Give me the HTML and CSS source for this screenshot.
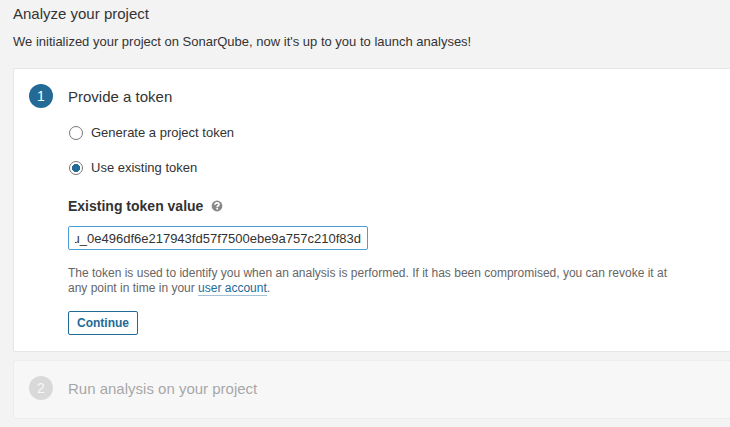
FILE: index.html
```html
<!DOCTYPE html>
<html lang="en">
<head>
<meta charset="utf-8">
<title>Analyze your project</title>
<link rel="stylesheet" href="styles.css">
</head>
<body>
<main class="page">
  <header class="page-header">
    <h1 class="title">Analyze your project</h1>
    <p class="intro">We initialized your project on SonarQube, now it's up to you to launch analyses!</p>
  </header>
  <section class="step">
    <span class="step-number">1</span>
    <div class="step-content">
      <h2 class="title step-title">Provide a token</h2>
      <form class="token-form">
        <label class="option"><input class="radio" type="radio" name="mode">Generate a project token</label>
        <label class="option"><input class="radio" type="radio" name="mode" checked>Use existing token</label>
        <div class="field-header">
          <label class="field-label" for="token">Existing token value</label>
          <svg class="help" viewBox="0 0 12 12" aria-hidden="true">
            <circle cx="6" cy="6" r="5.400" fill="#888"/>
            <path d="M4 4.700C4.100 3.400 4.900 2.800 6 2.800c1.200 0 2 .7 2 1.700 0 1.300-1.800 1.300-1.800 2.500" fill="none" stroke="#fff" stroke-width="1.700"/>
            <path d="M5.300 7.800h1.700v1.700H5.300z" fill="#fff"/>
          </svg>
        </div>
        <input class="token-input" id="token" type="text" value="squ_0e496df6e217943fd57f7500ebe9a757c210f83d">
        <p class="note">The token is used to identify you when an analysis is performed. If it has been compromised, you can revoke it at any point in time in your <a class="link" href="#">user account</a>.</p>
        <button class="button" type="button">Continue</button>
      </form>
    </div>
  </section>
  <section class="step step-disabled">
    <span class="step-number">2</span>
    <div class="step-content">
      <h2 class="title step-title">Run analysis on your project</h2>
    </div>
  </section>
</main>
</body>
</html>
```
FILE: styles.css
```css
* {
  box-sizing: border-box;
}

body {
  margin: 0;
  background: #f3f3f3;
  color: #333;
  font: 13px/20px "Liberation Sans", Arial, sans-serif;
}

.page {
  padding: 2px 0 9px 13px;
}

.page-header {
  margin-bottom: 16px;
}

.title {
  margin: 0;
  font-size: 15px;
  font-weight: 400;
  line-height: 24px;
}

.step-title {
  line-height: 26px;
}

.intro {
  margin: 6px 0 0;
}

.step {
  display: flex;
  gap: 15px;
  margin-bottom: 8px;
  padding: 15px 15px 16px;
  border: 1px solid #e6e6e6;
  border-right: 0;
  border-radius: 2px 0 0 2px;
  background: #fff;
}

.step-disabled {
  opacity: 0.4;
}

.step-number {
  flex: none;
  width: 24px;
  height: 24px;
  border-radius: 50%;
  background: #236a97;
  color: #fff;
  font-size: 14px;
  line-height: 24px;
  text-align: center;
}

.step-disabled .step-number {
  background: #b4b4b4;
}

.step-content {
  flex: 1;
  min-width: 0;
}

.token-form {
  display: flex;
  flex-direction: column;
  align-items: flex-start;
  margin-top: 13px;
}

.option {
  display: flex;
  align-items: center;
  gap: 7px;
  margin-bottom: 15px;
}

.radio {
  appearance: none;
  width: 14px;
  height: 14px;
  margin: 0 1px;
  border: 1px solid #777;
  border-radius: 50%;
  background: #fff;
}

.radio:checked {
  background: radial-gradient(circle, #236a97 4px, #fff 4px);
}

.field-header {
  display: flex;
  align-items: center;
  gap: 8px;
  margin: 3px 0 10px;
}

.field-label {
  font-size: 14px;
  font-weight: 700;
}

.help {
  width: 12px;
  height: 12px;
}

/* Right-to-left direction keeps the end of a long token in view. */
.token-input {
  width: 300px;
  max-width: 100%;
  height: 24px;
  padding: 0 6px;
  border: 1px solid #4b9fd5;
  border-radius: 2px;
  outline: 0;
  background: #fff;
  color: #333;
  font: inherit;
  direction: rtl;
}

.note {
  max-width: 600px;
  margin: 16px 0 15px;
  color: #666;
  font-size: 12px;
  line-height: 15px;
}

.link {
  border-bottom: 1px solid #a6c3d5;
  color: #236a97;
  text-decoration: none;
}

.button {
  height: 24px;
  padding: 0 8px;
  border: 1px solid #236a97;
  border-radius: 2px;
  background: #fff;
  color: #236a97;
  font: inherit;
  font-size: 12px;
  font-weight: 700;
}
```
